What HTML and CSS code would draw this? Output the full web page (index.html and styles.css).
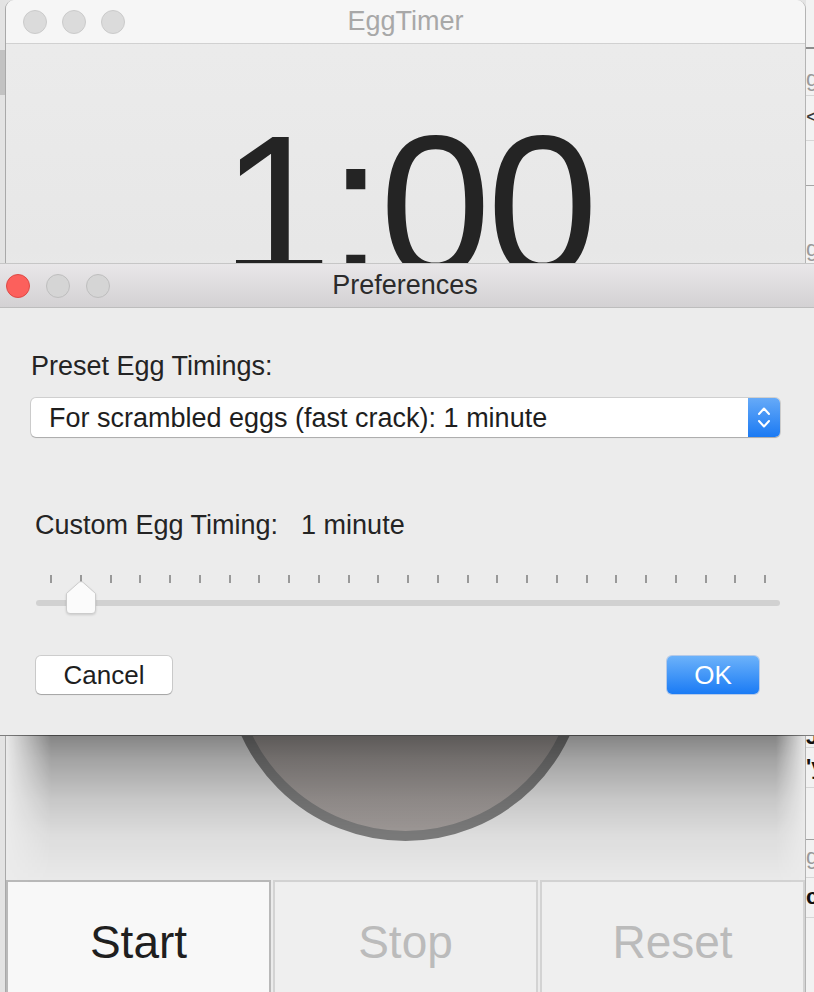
FILE: index.html
```html
<!DOCTYPE html>
<html lang="en">
<head>
    <meta charset="UTF-8">
    <meta name="viewport" content="width=device-width, initial-scale=1.0">
    <title>EggTimer</title>
    <link rel="stylesheet" href="styles.css">
</head>
<body>
    <div class="desktop">
        <!-- window behind, left -->
        <div class="edge-left"><div class="edge-thumb"></div></div>

        <!-- main EggTimer window -->
        <div class="window">
            <div class="titlebar">
                <div class="lights">
                    <span class="light"></span>
                    <span class="light"></span>
                    <span class="light"></span>
                </div>
                <div class="title">EggTimer</div>
                <div></div>
            </div>
            <div class="time">1:00</div>
            <div class="egg"></div>
            <div class="controls">
                <button class="ctl ctl-start">Start</button>
                <button class="ctl">Stop</button>
                <button class="ctl">Reset</button>
            </div>
        </div>

        <!-- window behind, right -->
        <div class="edge-right">
            <div class="seg seg-top"><span class="dash"></span></div>
            <div class="seg seg-g">g</div>
            <div class="seg seg-arrow">&lt;</div>
            <div class="seg seg-mid"></div>
            <div class="seg seg-g2">g</div>
            <div class="seg seg-hidden"></div>
            <div class="seg seg-j">J</div>
            <div class="seg seg-y">'y</div>
            <div class="seg seg-mid2"></div>
            <div class="seg seg-g3">g</div>
            <div class="seg seg-c">c</div>
        </div>
    </div>

    <!-- Preferences sheet -->
    <div class="sheet">
        <div class="sheet-bar">
            <div class="lights lights-sheet">
                <span class="light light-close"></span>
                <span class="light"></span>
                <span class="light"></span>
            </div>
            <div class="sheet-title">Preferences</div>
            <div></div>
        </div>

        <div class="sheet-body">
            <div class="field-label">Preset Egg Timings:</div>
            <div class="popup">
                <div class="popup-text">For scrambled eggs (fast crack): 1 minute</div>
                <div class="stepper">
                    <svg width="32" height="39" viewBox="0 0 32 39">
                        <polyline points="11,16 16,10.5 21,16" fill="none" stroke="#fff" stroke-width="2" stroke-linecap="round" stroke-linejoin="round"/>
                        <polyline points="11,23 16,28.5 21,23" fill="none" stroke="#fff" stroke-width="2" stroke-linecap="round" stroke-linejoin="round"/>
                    </svg>
                </div>
            </div>

            <div class="custom">
                <span>Custom Egg Timing:</span>
                <span>1 minute</span>
            </div>

            <div class="slider">
                <div class="ticks">
                    <span></span><span></span><span></span><span></span><span></span>
                    <span></span><span></span><span></span><span></span><span></span>
                    <span></span><span></span><span></span><span></span><span></span>
                    <span></span><span></span><span></span><span></span><span></span>
                    <span></span><span></span><span></span><span></span><span></span>
                </div>
                <div class="track"></div>
                <svg class="knob" width="32" height="36" viewBox="0 0 32 36">
                    <path d="M1.5 13.5 L14.2 2.2 Q16 0.8 17.8 2.2 L30.5 13.5 V30 Q30.5 33.5 27 33.5 H5 Q1.5 33.5 1.5 30 Z" fill="#fbfbfb" stroke="#c4c4c4" stroke-width="0.8"/>
                </svg>
            </div>

            <div class="sheet-actions">
                <button class="btn btn-cancel">Cancel</button>
                <button class="btn btn-ok">OK</button>
            </div>
        </div>
    </div>
</body>
</html>
```

FILE: styles.css
```css
:root {
    --text: #242424;
    --pane: #ececec;
    --blue-top: #6cb2fa;
    --blue-bottom: #1a7bf5;
}

body {
    margin: 0;
    width: 814px;
    height: 992px;
    overflow: hidden;
    position: relative;
    background: #e4e4e4;
    font-family: "Liberation Sans", Arial, sans-serif;
    color: var(--text);
}

button {
    font-family: inherit;
    margin: 0;
    padding: 0;
    cursor: default;
}

.desktop {
    display: flex;
    height: 992px;
}

/* windows peeking out behind */
.edge-left {
    width: 5px;
    flex: none;
    background: #e3e3e3;
    padding-top: 50px;
    box-sizing: border-box;
}

.edge-thumb {
    height: 45px;
    background: #c2c2c2;
}

.edge-right {
    width: 8px;
    flex: none;
    background: #f2f2f2;
    display: flex;
    flex-direction: column;
    overflow: hidden;
    font-size: 22px;
    line-height: 1;
    white-space: nowrap;
}

.seg {
    flex: none;
    border-bottom: 1px solid #d6d6d6;
    box-sizing: border-box;
    color: #9a9a9a;
}

.seg-top { height: 60px; padding-top: 47px; border-bottom: none; }
.dash { display: block; width: 8px; height: 2px; background: #8d8d8d; }
.seg-g { height: 36px; padding-top: 8px; }
.seg-arrow { height: 45px; padding-top: 10px; color: #3a3a3a; }
.seg-mid { height: 45px; border-bottom-color: #a5a5a5; }
.seg-g2 { height: 80px; padding-top: 52px; }
.seg-hidden { height: 470px; }
.seg-j { height: 22px; color: #111; font-weight: bold; margin-top: -10px; }
.seg-y { height: 40px; padding-top: 8px; color: #111; font-weight: bold; }
.seg-mid2 { height: 52px; border-bottom-color: #a0a0a0; }
.seg-g3 { height: 38px; padding-top: 6px; }
.seg-c { height: 40px; padding-top: 8px; color: #111; font-weight: bold; }

/* EggTimer window */
.window {
    width: 801px;
    flex: none;
    box-sizing: border-box;
    border-left: 1px solid #a9a9a9;
    border-right: 1px solid #b4b4b4;
    border-radius: 9px 9px 0 0;
    overflow: hidden;
    background: linear-gradient(#ececec, #e7e7e7 250px, #ebebeb 320px);
    display: flex;
    flex-direction: column;
}

.titlebar {
    height: 43px;
    flex: none;
    border-bottom: 1px solid #d1d1d1;
    background: #f6f6f6;
    display: grid;
    grid-template-columns: 1fr auto 1fr;
    align-items: center;
}

.lights {
    display: flex;
    gap: 15px;
    padding-left: 17px;
}

.light {
    width: 24px;
    height: 24px;
    border-radius: 50%;
    box-sizing: border-box;
    background: #dbdbdb;
    border: 1px solid #cbcbcb;
}

.title {
    font-size: 27px;
    color: #a8a8a8;
}

.time {
    margin-top: 62px;
    font-size: 200px;
    line-height: 200px;
    letter-spacing: -4px;
    text-indent: 4px;
    text-align: center;
    color: #242424;
}

.egg {
    width: 361px;
    height: 361px;
    flex: none;
    box-sizing: border-box;
    border-radius: 50%;
    border: 10px solid #818181;
    background: linear-gradient(#a09b98, #a7a19f);
    margin: 174px auto 0;
}

.controls {
    display: flex;
    gap: 2px;
    margin-top: 39px;
}

.ctl {
    flex: 1;
    height: 124px;
    border: 2px solid #d3d3d3;
    background: #efefef;
    font-size: 46px;
    color: #bbbbbb;
}

.ctl-start {
    border-color: #b9b9b9;
    background: #f8f8f8;
    color: #1f1f1f;
}

/* Preferences sheet */
.sheet {
    position: absolute;
    top: 263px;
    left: 0;
    width: 814px;
    height: 473px;
    box-sizing: border-box;
    background: var(--pane);
    border-top: 1px solid #c6c6c6;
    border-bottom: 1px solid #7d7d7d;
}

.sheet::after {
    content: "";
    position: absolute;
    top: 100%;
    left: 6px;
    right: 8px;
    height: 150px;
    background: linear-gradient(rgba(0,0,0,0.44), rgba(0,0,0,0.3) 25px, rgba(0,0,0,0.15) 65px, rgba(0,0,0,0.06) 100px, rgba(0,0,0,0) 150px);
    -webkit-mask-image: linear-gradient(to right, transparent, #000 45px, #000 calc(100% - 30px), transparent);
    mask-image: linear-gradient(to right, transparent, #000 45px, #000 calc(100% - 30px), transparent);
}

.sheet-bar {
    height: 43px;
    border-bottom: 1px solid #bdbdbd;
    background: linear-gradient(#e9e7e9, #d3d1d3);
    display: grid;
    grid-template-columns: 1fr auto 1fr;
    align-items: center;
}

.lights-sheet {
    padding-left: 6px;
    gap: 16px;
}

.lights-sheet .light {
    background: #d5d5d5;
    border-color: #bebebe;
}

.lights-sheet .light-close {
    background: #fc605c;
    border-color: #dd4a46;
}

.sheet-title {
    font-size: 27px;
    color: #2b2b2b;
    padding-right: 4px;
}

.sheet-body {
    padding-top: 43px;
}

.field-label {
    padding-left: 31px;
    font-size: 27px;
    line-height: 30px;
}

.popup {
    margin: 17px 34px 0 31px;
    height: 39px;
    display: flex;
    background: #fff;
    border-radius: 5px;
    box-shadow: 0 0 0 1px rgba(0,0,0,0.12), 0 1px 1px rgba(0,0,0,0.18);
}

.popup-text {
    flex: 1;
    padding-left: 18px;
    font-size: 27px;
    line-height: 40px;
    color: #1e1e1e;
}

.stepper {
    width: 32px;
    background: linear-gradient(#66aaf8, #1b7af3);
    border-radius: 0 5px 5px 0;
}

.stepper svg {
    display: block;
}

.custom {
    margin-top: 73px;
    padding-left: 35px;
    display: flex;
    gap: 23px;
    font-size: 27px;
    line-height: 30px;
}

.slider {
    position: relative;
    margin: 35px 34px 0 36px;
}

.ticks {
    display: flex;
    justify-content: space-between;
    padding: 0 14px;
    height: 8px;
}

.ticks span {
    width: 2px;
    background: #999;
}

.track {
    margin-top: 17px;
    height: 6px;
    border-radius: 3px;
    background: #d1d1d1;
}

.knob {
    position: absolute;
    left: 29px;
    top: 5px;
    filter: drop-shadow(0 1px 1px rgba(0,0,0,0.15));
}

.sheet-actions {
    margin-top: 50px;
    padding: 0 55px 0 36px;
    display: flex;
    justify-content: space-between;
}

.btn {
    height: 38px;
    border: none;
    border-radius: 5px;
    font-size: 26px;
}

.btn-cancel {
    width: 136px;
    background: #fff;
    color: #1e1e1e;
    box-shadow: 0 0 0 1px rgba(0,0,0,0.13), 0 1px 1px rgba(0,0,0,0.2);
}

.btn-ok {
    width: 92px;
    background: linear-gradient(var(--blue-top), var(--blue-bottom));
    color: #fff;
    box-shadow: 0 0 0 1px rgba(20,100,220,0.25);
}
```
